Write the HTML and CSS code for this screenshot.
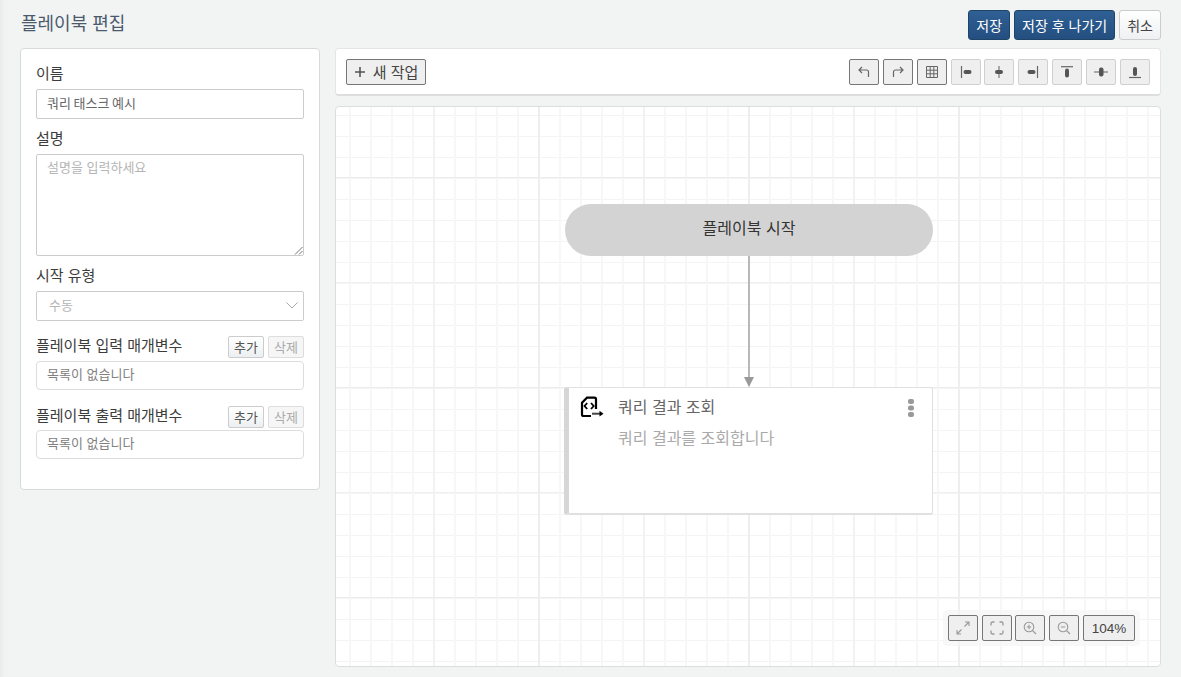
FILE: index.html

```html
<!DOCTYPE html>
<html lang="ko">
<head>
  <meta charset="UTF-8">
  <meta name="viewport" content="width=device-width, initial-scale=1">
  <title>플레이북 편집</title>
  <link rel="stylesheet" href="styles.css">
</head>
<body>

  <header class="top-bar">
    <h1 class="page-title">플레이북 편집</h1>
    <div class="top-actions">
      <button class="btn btn-primary">저장</button>
      <button class="btn btn-primary">저장 후 나가기</button>
      <button class="btn btn-light">취소</button>
    </div>
  </header>

  <main class="editor">
    <aside class="side-panel">
      <label class="field-label">이름</label>
      <div class="text-box">쿼리 태스크 예시</div>

      <label class="field-label label-gap">설명</label>
      <div class="text-area">
        <span class="placeholder">설명을 입력하세요</span>
        <svg class="resize-grip" width="9" height="9" viewBox="0 0 9 9">
          <path d="M1 8.500 8.500 1M5 8.500 8.500 5" stroke="#777" fill="none"/>
        </svg>
      </div>

      <label class="field-label label-gap">시작 유형</label>
      <div class="text-box select-box">
        <span class="placeholder">수동</span>
        <svg width="12" height="7" viewBox="0 0 12 7">
          <path d="M.5.5 6 6 11.500.5" stroke="#aaa" fill="none"/>
        </svg>
      </div>

      <div class="param-head">
        <span class="field-label">플레이북 입력 매개변수</span>
        <span class="mini-buttons">
          <button class="btn-mini">추가</button>
          <button class="btn-mini disabled">삭제</button>
        </span>
      </div>
      <div class="empty-list">목록이 없습니다</div>

      <div class="param-head param-second">
        <span class="field-label">플레이북 출력 매개변수</span>
        <span class="mini-buttons">
          <button class="btn-mini">추가</button>
          <button class="btn-mini disabled">삭제</button>
        </span>
      </div>
      <div class="empty-list">목록이 없습니다</div>
    </aside>

    <section class="work-area">
      <div class="toolbar">
        <button class="btn-tool btn-new">
          <svg width="12" height="12" viewBox="0 0 12 12">
            <path d="M6 1v10M1 6h10" stroke="#555" stroke-width="1.600" fill="none"/>
          </svg>
          <span>새 작업</span>
        </button>
        <div class="tool-group">
          <button class="btn-tool icon-btn">
            <svg width="14" height="14" viewBox="0 0 14 14" fill="none" stroke="#666" stroke-width="1.200">
              <path d="M5 2 2 5l3 3M2 5h7.500a2 2 0 0 1 2 2v5"/>
            </svg>
          </button>
          <button class="btn-tool icon-btn">
            <svg width="14" height="14" viewBox="0 0 14 14" fill="none" stroke="#666" stroke-width="1.200">
              <path d="M9 2l3 3-3 3M12 5H4.500a2 2 0 0 0-2 2v5"/>
            </svg>
          </button>
          <button class="btn-tool icon-btn">
            <svg width="14" height="14" viewBox="0 0 14 14" fill="none" stroke="#666">
              <path d="M1.500 1.500h11v11h-11zM5.200 1.500v11M8.800 1.500v11M1.500 5.200h11M1.500 8.800h11"/>
            </svg>
          </button>
          <button class="btn-tool icon-btn dim tool-tight">
            <svg width="14" height="14" viewBox="0 0 14 14">
              <path d="M2.500 1v12" stroke="#666" stroke-width="1.200"/>
              <rect x="4.500" y="5" width="8" height="4" rx="2" fill="#555"/>
            </svg>
          </button>
          <button class="btn-tool icon-btn dim">
            <svg width="14" height="14" viewBox="0 0 14 14">
              <path d="M7 1v12" stroke="#777" stroke-width="1.200"/>
              <rect x="3" y="5" width="8" height="4" rx="2" fill="#555"/>
            </svg>
          </button>
          <button class="btn-tool icon-btn dim">
            <svg width="14" height="14" viewBox="0 0 14 14">
              <path d="M11.500 1v12" stroke="#666" stroke-width="1.200"/>
              <rect x="1.500" y="5" width="8" height="4" rx="2" fill="#555"/>
            </svg>
          </button>
          <button class="btn-tool icon-btn dim">
            <svg width="14" height="14" viewBox="0 0 14 14">
              <path d="M1 1.700h12" stroke="#666" stroke-width="1.200"/>
              <rect x="5" y="3.500" width="4" height="9" rx="2" fill="#555"/>
            </svg>
          </button>
          <button class="btn-tool icon-btn dim">
            <svg width="14" height="14" viewBox="0 0 14 14">
              <path d="M0 7h14" stroke="#777" stroke-width="1.200"/>
              <rect x="5" y="2.500" width="4.500" height="9" rx="2" fill="#555"/>
            </svg>
          </button>
          <button class="btn-tool icon-btn dim">
            <svg width="14" height="14" viewBox="0 0 14 14">
              <path d="M1 12.500h12" stroke="#666" stroke-width="1.200"/>
              <rect x="5" y="2" width="4" height="9" rx="2" fill="#555"/>
            </svg>
          </button>
        </div>
      </div>

      <div class="canvas">
        <svg class="edge" width="14" height="132" viewBox="0 0 14 132">
          <path d="M7 0v122" stroke="#a6a6a6" stroke-width="1.500" fill="none"/>
          <path d="M2 121h10l-5 10z" fill="#999"/>
        </svg>

        <div class="node-start">플레이북 시작</div>

        <div class="node-task">
          <svg class="task-icon" width="24" height="24" viewBox="0 0 24 24" fill="none" stroke="#000" stroke-width="2.200">
            <path d="M16 13V3.200a1.500 1.500 0 0 0-1.500-1.500H7L2 6.700V18.500A1.500 1.500 0 0 0 3.500 20H11"/>
            <path d="M7.200 7 4.500 10l2.700 3M11 7l2.700 3-2.700 3" stroke-width="1.800"/>
            <path d="M12 17.700h8" stroke="#444" stroke-width="2"/>
            <path d="M19.500 14.800 23.500 17.700 19.500 20.600z" fill="#000" stroke="none"/>
          </svg>
          <div class="task-text">
            <div class="task-name">쿼리 결과 조회</div>
            <div class="task-desc">쿼리 결과를 조회합니다</div>
          </div>
          <svg class="task-menu" width="6" height="18" viewBox="0 0 6 18" fill="#999">
            <rect x="0" y="0" width="6" height="5" rx="2"/>
            <rect x="0" y="6.500" width="6" height="5" rx="2"/>
            <rect x="0" y="13" width="6" height="5" rx="2"/>
          </svg>
        </div>

        <div class="zoom-bar">
          <button class="btn-tool icon-btn">
            <svg width="14" height="14" viewBox="0 0 14 14" fill="none" stroke="#999" stroke-width="1.100">
              <path d="M8.500 5.500 13 1M9 1h4v4M5.500 8.500 1 13M1 9v4h4"/>
            </svg>
          </button>
          <button class="btn-tool icon-btn tool-tight">
            <svg width="14" height="14" viewBox="0 0 14 14" fill="none" stroke="#999" stroke-width="1.300">
              <path d="M1 4.500V2.500A1.500 1.500 0 0 1 2.500 1h2M9.500 1h2A1.500 1.500 0 0 1 13 2.500v2M13 9.500v2a1.500 1.500 0 0 1-1.500 1.500h-2M4.500 13h-2A1.500 1.500 0 0 1 1 11.500v-2"/>
            </svg>
          </button>
          <button class="btn-tool icon-btn">
            <svg width="14" height="14" viewBox="0 0 14 14" fill="none" stroke="#999" stroke-width="1.100">
              <circle cx="6" cy="6" r="4.800"/>
              <path d="M9.500 9.500 13 13M3.800 6h4.400M6 3.800v4.400"/>
            </svg>
          </button>
          <button class="btn-tool icon-btn">
            <svg width="14" height="14" viewBox="0 0 14 14" fill="none" stroke="#999" stroke-width="1.100">
              <circle cx="6" cy="6" r="4.800"/>
              <path d="M9.500 9.500 13 13M3.800 6h4.400"/>
            </svg>
          </button>
          <button class="btn-tool zoom-value">104%</button>
        </div>
      </div>
    </section>
  </main>

</body>
</html>
```

FILE: styles.css

```css
* {
  box-sizing: border-box;
}
html, body {
  height: 100%;
}
body {
  margin: 0;
  padding: 10px 20px;
  background-color: #f2f4f4;
  box-shadow: inset 6px 0 6px -5px #e4e6e6;
  color: #333;
  font-family: "Noto Sans CJK KR", "Liberation Sans", sans-serif;
  font-size: 14px;
  overflow: hidden;
}
button {
  font-family: inherit;
  cursor: pointer;
}

.top-bar {
  display: flex;
  justify-content: space-between;
  height: 30px;
}
.page-title {
  margin: 0;
  padding-left: 1px;
  font-size: 18px;
  font-weight: 400;
  line-height: 24px;
  color: #4a5a6c;
}
.top-actions {
  display: flex;
  gap: 4px;
}
.btn {
  height: 30px;
  padding: 0 7px;
  border-radius: 3px;
  font-size: 14px;
  line-height: 26px;
}
.btn-primary {
  background: linear-gradient(#2f6094, #244e80);
  border: 1px solid #1e4468;
  color: #fff;
}
.btn-light {
  background: linear-gradient(#fff, #eef0f2);
  border: 1px solid #ccc;
  color: #444;
}

.editor {
  display: flex;
  gap: 15px;
  margin-top: 8px;
  height: 619px;
}
.side-panel {
  width: 300px;
  height: 442px;
  padding: 14px 15px;
  background: #fff;
  border: 1px solid #d8dada;
  border-radius: 4px;
}
.field-label {
  display: block;
  font-size: 15px;
  line-height: 20px;
  color: #3c3c3c;
}
.label-gap {
  margin-top: 9px;
}
.text-box {
  height: 30px;
  margin-top: 6px;
  padding: 0 10px;
  border: 1px solid #ccc;
  border-radius: 2px;
  font-size: 13px;
  line-height: 26px;
  word-spacing: -1px;
  color: #666;
}
.text-area {
  position: relative;
  height: 102px;
  margin-top: 6px;
  padding: 2px 10px;
  border: 1px solid #ccc;
  border-radius: 2px;
  font-size: 13px;
  line-height: 20px;
}
.resize-grip {
  position: absolute;
  right: 0;
  bottom: 0;
}
.placeholder {
  color: #b5b5b5;
}
.select-box {
  display: flex;
  align-items: center;
  justify-content: space-between;
  padding-left: 12px;
  padding-right: 5px;
  padding-bottom: 2px;
}
.param-head {
  display: flex;
  align-items: flex-start;
  justify-content: space-between;
  height: 22px;
  margin-top: 15px;
}
.param-head .field-label {
  line-height: 17px;
}
.param-second {
  margin-top: 16px;
}
.mini-buttons {
  display: flex;
  gap: 4px;
}
.btn-mini {
  width: 36px;
  height: 22px;
  padding: 0;
  background: linear-gradient(#fff, #eceff1);
  border: 1px solid #ccc;
  border-radius: 2px;
  font-size: 13px;
  line-height: 18px;
  color: #555;
}
.btn-mini.disabled {
  background: #f6f6f6;
  border-color: #ddd;
  color: #aaa;
}
.empty-list {
  height: 29px;
  margin-top: 3px;
  padding: 0 10px;
  border: 1px solid #ddd;
  border-radius: 4px;
  font-size: 13px;
  line-height: 24px;
  color: #808080;
}
.param-second + .empty-list {
  margin-top: 2px;
}

.work-area {
  display: flex;
  flex-direction: column;
  flex: 1;
  gap: 10px;
}
.toolbar {
  display: flex;
  align-items: center;
  justify-content: space-between;
  height: 48px;
  padding: 0 10px;
  background: #fff;
  border: 1px solid #e4e6e6;
  border-bottom: 2px solid #dcdede;
  border-radius: 4px;
}
.tool-group {
  display: flex;
  gap: 4px;
}
.btn-tool {
  display: flex;
  align-items: center;
  justify-content: center;
  height: 26px;
  padding: 0;
  background: #efefef;
  border: 1px solid #767676;
  border-radius: 2px;
  font-size: 14px;
  color: #444;
}
.btn-new {
  gap: 7px;
  width: 80px;
  font-size: 15px;
}
.icon-btn {
  width: 30px;
}
.icon-btn.dim {
  border-color: #d0d0d0;
}
.tool-tight {
  margin-right: -1px;
}

.canvas {
  position: relative;
  flex: 1;
  overflow: hidden;
  border: 1px solid #dcdede;
  border-radius: 4px;
  background-color: #fff;
  background-image:
    linear-gradient(to right, #eeeeee 2px, transparent 2px),
    linear-gradient(to bottom, #ececec 1px, transparent 1px),
    linear-gradient(to right, #f2f2f2 2px, transparent 2px),
    linear-gradient(to bottom, #f0f0f0 1px, transparent 1px),
    linear-gradient(to right, #f7f7f7 2px, transparent 2px),
    linear-gradient(to bottom, #f4f4f4 1px, transparent 1px);
  background-size:
    210px 210px, 210px 210px,
    105px 105px, 105px 105px,
    21px 21px, 21px 21px;
  background-position:
    202px 69px, 202px 70px,
    97px 69px, 97px 70px,
    13px 7px, 13px 8px;
}
.edge {
  position: absolute;
  left: 406px;
  top: 149px;
}
.node-start {
  position: absolute;
  left: 229px;
  top: 97px;
  width: 368px;
  height: 52px;
  background: #d3d3d3;
  border-radius: 26px;
  font-size: 16px;
  line-height: 46px;
  text-align: center;
  color: #333;
}
.node-task {
  position: absolute;
  left: 228px;
  top: 280px;
  display: flex;
  width: 369px;
  height: 128px;
  background: #fff;
  border: 1px solid #e0e0e0;
  border-bottom-width: 2px;
  border-left: 5px solid #d6d6d6;
  border-radius: 3px;
}
.task-icon {
  position: absolute;
  left: 11px;
  top: 8px;
}
.task-text {
  padding: 6px 0 0 49px;
}
.task-name {
  font-size: 16px;
  line-height: 24px;
  color: #666;
}
.task-desc {
  margin-top: 7px;
  font-size: 16px;
  line-height: 24px;
  color: #aaa;
}
.task-menu {
  position: absolute;
  right: 18px;
  top: 11px;
}
.zoom-bar {
  position: absolute;
  right: 20px;
  bottom: 20px;
  display: flex;
  gap: 4px;
  padding: 5px;
  background: rgba(245, 245, 245, 0.7);
  border-radius: 4px;
}
.zoom-value {
  width: 52px;
  font-family: "Liberation Sans", sans-serif;
  font-size: 13.5px;
  color: #444;
}
```
